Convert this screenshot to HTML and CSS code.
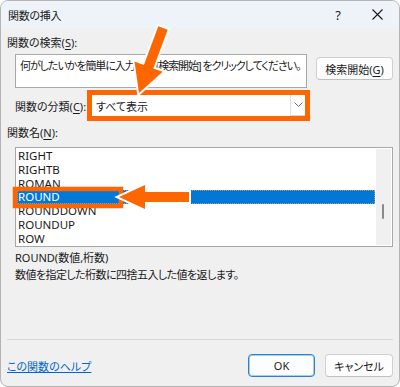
FILE: index.html
```html
<!DOCTYPE html>
<html lang="ja">
<head>
    <meta charset="UTF-8">
    <meta name="viewport" content="width=device-width, initial-scale=1.0">
    <title>関数の挿入</title>
    <link rel="stylesheet" href="styles.css">
</head>
<body>

    <div class="dialog">
        <div class="titlebar">
            <span class="title">関数の挿入</span>
            <span class="help">?</span>
            <span class="close">
                <svg width="11" height="11" viewBox="0 0 11 11">
                    <path d="M0.5 0.5 L10.5 10.5 M10.5 0.5 L0.5 10.5" stroke="#1a1a1a" stroke-width="1.1" fill="none"/>
                </svg>
            </span>
        </div>

        <div class="content">
            <div class="label">関数の検索(<u>S</u>):</div>
            <div class="search-row">
                <div class="search-box">何がしたいかを簡単に入力して、[検索開始] をクリックしてください。</div>
                <button class="btn btn-search">検索開始(<u>G</u>)</button>
            </div>

            <div class="category-row">
                <span class="category-label">関数の分類(<u>C</u>):</span>
                <div class="combo">
                    <span class="combo-value">すべて表示</span>
                    <span class="combo-arrow">
                        <svg width="9" height="6" viewBox="0 0 9 6">
                            <path d="M0.5 0.5 L4.5 4.5 L8.5 0.5" stroke="#6e6e6e" stroke-width="1" fill="none"/>
                        </svg>
                    </span>
                </div>
            </div>

            <div class="label label-list">関数名(<u>N</u>):</div>
            <div class="listbox">
                <ul class="items">
                    <li>RIGHT</li>
                    <li>RIGHTB</li>
                    <li>ROMAN</li>
                    <li class="selected">ROUND</li>
                    <li>ROUNDDOWN</li>
                    <li>ROUNDUP</li>
                    <li>ROW</li>
                </ul>
                <div class="scrollbar"><div class="thumb"></div></div>
            </div>

            <div class="signature">ROUND(数値,桁数)</div>
            <div class="desc">数値を指定した桁数に四捨五入した値を返します。</div>
        </div>

        <div class="footer">
            <a class="help-link" href="#">この関数のヘルプ</a>
            <div class="buttons">
                <button class="btn btn-ok">OK</button>
                <button class="btn btn-cancel">キャンセル</button>
            </div>
        </div>

        <!-- 注釈 (矢印と枠) -->
        <svg class="annotations" width="400" height="387" viewBox="0 0 400 387">
            <rect x="15" y="189" width="106" height="17" fill="none" stroke="#ff6600" stroke-width="4.5"/>
            <polygon class="arrow" points="119,197 145,185 145,192 189,192 189,202 145,202 145,209"/>
            <polygon class="arrow" points="139,93 162.7,71.8 153.3,68.4 167.7,29.7 158.3,26.3 143.9,65 134.5,61.6"/>
        </svg>
    </div>

</body>
</html>
```

FILE: styles.css
```css
:root {
    --window-bg: #f0f0f0;
    --title-bg: #eef3f9;
    --border-color: #b4b4b4;
    --field-border: #a8a8a8;
    --text-color: #1a1a1a;
    --select-color: #0078d7;
    --link-color: #0066cc;
    --accent-color: #ff6600;
}

* {
    box-sizing: border-box;
    margin: 0;
    padding: 0;
}

body {
    font-family: "Noto Sans", "Noto Sans CJK JP", sans-serif;
    font-size: 11px;
    font-feature-settings: "palt";
    color: var(--text-color);
    background: #ffffff;
}

u {
    text-decoration-thickness: 1px;
    text-underline-offset: 2px;
}

.dialog {
    position: relative;
    width: 400px;
    height: 387px;
    display: flex;
    flex-direction: column;
    background-color: var(--window-bg);
    border: 1px solid var(--border-color);
    border-radius: 8px;
    overflow: hidden;
}

.titlebar {
    height: 27px;
    display: flex;
    align-items: center;
    padding-left: 7px;
    background-color: var(--title-bg);
}

.title {
    flex: 1;
    font-size: 11px;
    letter-spacing: -0.3px;
}

.help {
    font-size: 13px;
    margin-right: 31px;
}

.close {
    display: flex;
    margin-right: 16px;
}

.content {
    flex: 1;
    padding: 7px 6px 0 6px;
}

.label {
    line-height: 16px;
}

.search-row {
    display: flex;
    align-items: flex-start;
    gap: 9px;
    margin-top: 3px;
    padding-left: 8px;
}

.search-box {
    width: 292px;
    height: 34px;
    padding: 3px 3px 3px 4px;
    background: #ffffff;
    border: 1px solid var(--field-border);
    line-height: 16px;
    letter-spacing: -1.05px;
    white-space: pre;
    overflow: hidden;
}

.btn {
    font-family: inherit;
    font-size: 11px;
    font-feature-settings: "palt";
    color: var(--text-color);
    background: #fdfdfd;
    border: 1px solid #d0d0d0;
    border-bottom-color: #c0c0c0;
    border-radius: 4px;
    height: 23px;
}

.btn-search {
    width: 77px;
    margin-top: 3px;
}

.category-row {
    display: flex;
    align-items: center;
    margin-top: 2px;
    padding-left: 8px;
}

.category-label {
    width: 72px;
}

.combo {
    width: 223px;
    height: 31px;
    display: flex;
    align-items: center;
    background: #ffffff;
    border: 5px solid var(--accent-color);
}

.combo-value {
    flex: 1;
    padding-left: 4px;
}

.combo-arrow {
    width: 15px;
    height: 100%;
    display: flex;
    align-items: center;
    justify-content: center;
    border-left: 1px solid #e2e2e2;
    border-bottom: 1px solid #d6d6d6;
}

.label-list {
    margin-top: 4px;
}

.listbox {
    display: flex;
    height: 100px;
    margin: 6px 0 0 8px;
    background: #ffffff;
    border: 1px solid var(--field-border);
}

.items {
    flex: 1;
    list-style: none;
    padding: 1px 1px 0 1px;
    font-size: 11.5px;
}

.items li {
    height: 13.75px;
    line-height: 13.75px;
    padding-left: 1px;
}

.items li.selected {
    background-color: var(--select-color);
    color: #ffffff;
    outline: 1px dotted #b59a7a;
    outline-offset: -1px;
}

.scrollbar {
    width: 15px;
    margin: 1px 1px 1px 0;
    background-color: var(--window-bg);
    position: relative;
}

.thumb {
    position: absolute;
    left: 6px;
    top: 55px;
    width: 2px;
    height: 15px;
    border-radius: 1px;
    background-color: #8a8a8a;
}

.signature {
    margin-top: 3px;
    padding-left: 8px;
    line-height: 16px;
}

.desc {
    margin-top: 1px;
    padding-left: 8px;
    line-height: 16px;
    letter-spacing: -0.55px;
}

.footer {
    display: flex;
    align-items: center;
    justify-content: space-between;
    margin: 0 6px;
    padding: 14px 0 9px 0;
    border-top: 1px solid #d9d9d9;
}

.help-link {
    color: var(--link-color);
    text-decoration: underline;
}

.buttons {
    display: flex;
    gap: 10px;
}

.btn-ok {
    width: 67px;
    border: 1px solid #2d7fd0;
    box-shadow: inset 0 0 0 1px #a9cdf0;
}

.btn-cancel {
    width: 68px;
}

.annotations {
    position: absolute;
    top: -1px;
    left: -1px;
    pointer-events: none;
}

.arrow {
    fill: var(--accent-color);
    stroke: #ffffff;
    stroke-width: 4;
    stroke-linejoin: miter;
    paint-order: stroke;
}
```
